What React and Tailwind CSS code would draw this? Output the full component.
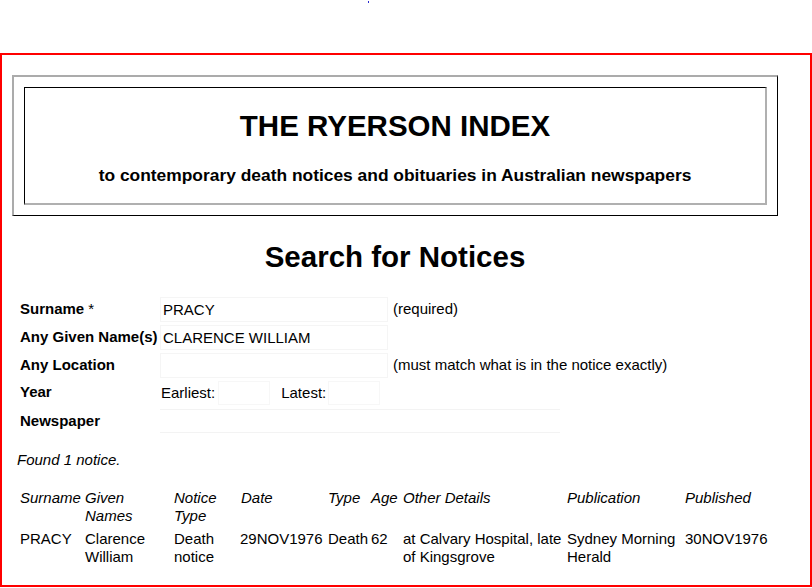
export default function App() {
  const cols = 'grid grid-cols-[65px_89px_66px_88px_43px_32px_164px_118px_1fr]';

  return (
    <div className="w-[812px] h-[588px] overflow-hidden bg-white text-black font-['Liberation_Sans',Arial,sans-serif] text-[15px]">
      {/* stray link dot at the very top */}
      <div className="h-[53px] pt-px pl-[368px]">
        <div className="w-px h-[2px] bg-[#2a2ad0]" />
      </div>

      <div className="h-[534px] border-2 border-[#ff0000] pt-[20px] pl-[10px]">
        {/* header banner */}
        <div className="w-[766px] border-t-2 border-l-2 border-[#ababab] border-r border-b border-r-black border-b-black p-[10px]">
          <div className="h-[118px] border-t border-l border-black border-r-2 border-b-2 border-r-[#b0b0b0] border-b-[#b0b0b0] pt-[21px] text-center">
            <h1 className="text-[29.5px] leading-[34px] font-bold">THE RYERSON INDEX</h1>
            <p className="mt-[22px] text-[17.4px] leading-[20px] font-bold">
              to contemporary death notices and obituaries in Australian newspapers
            </p>
          </div>
        </div>

        <h2 className="mt-[24px] w-[766px] text-center text-[29.5px] leading-[34px] font-bold">Search for Notices</h2>

        {/* search form */}
        <div className="mt-[21px] pl-[8px]">
          <div className="grid grid-cols-[140px_auto] auto-rows-[28px] items-center">
            <div className="font-bold">Surname <span className="font-normal">*</span></div>
            <div className="flex items-center">
              <input readOnly value="PRACY" className="w-[228px] h-[25px] border border-[#f5f5f5] px-[2px] outline-none" />
              <span className="ml-[5px]">(required)</span>
            </div>

            <div className="font-bold">Any Given Name(s)</div>
            <div className="flex items-center">
              <input readOnly value="CLARENCE WILLIAM" className="w-[228px] h-[25px] border border-[#f5f5f5] px-[2px] outline-none" />
            </div>

            <div className="font-bold">Any Location</div>
            <div className="flex items-center">
              <input readOnly value="" className="w-[228px] h-[25px] border border-[#f5f5f5] px-[2px] outline-none" />
              <span className="ml-[5px]">(must match what is in the notice exactly)</span>
            </div>

            <div className="font-bold -mt-[2px]">Year</div>
            <div className="flex items-center pl-px">
              <span>Earliest:</span>
              <input readOnly value="" className="ml-[3px] w-[52px] h-[24px] border border-[#f7f7f7] outline-none" />
              <span className="ml-[11px]">Latest:</span>
              <input readOnly value="" className="ml-[2px] w-[52px] h-[24px] border border-[#f7f7f7] outline-none" />
            </div>

            <div className="font-bold">Newspaper</div>
            <div className="flex items-center">
              <div className="w-[400px] h-[24px] border-y border-[#f3f3f3]" />
            </div>
          </div>
        </div>

        {/* results */}
        <p className="mt-[16px] pl-[5px] italic leading-[18px]">Found 1 notice.</p>

        <div className="mt-[20px] pl-[8px] leading-[18px]">
          <div className={`${cols} italic`}>
            <div>Surname</div>
            <div>Given<br />Names</div>
            <div>Notice<br />Type</div>
            <div className="pl-px">Date</div>
            <div>Type</div>
            <div>Age</div>
            <div>Other Details</div>
            <div>Publication</div>
            <div>Published</div>
          </div>
          <div className={`${cols} mt-[5px]`}>
            <div>PRACY</div>
            <div>Clarence<br />William</div>
            <div>Death<br />notice</div>
            <div>29NOV1976</div>
            <div>Death</div>
            <div>62</div>
            <div>at Calvary Hospital, late<br />of Kingsgrove</div>
            <div>Sydney Morning<br />Herald</div>
            <div>30NOV1976</div>
          </div>
        </div>
      </div>
    </div>
  );
}
